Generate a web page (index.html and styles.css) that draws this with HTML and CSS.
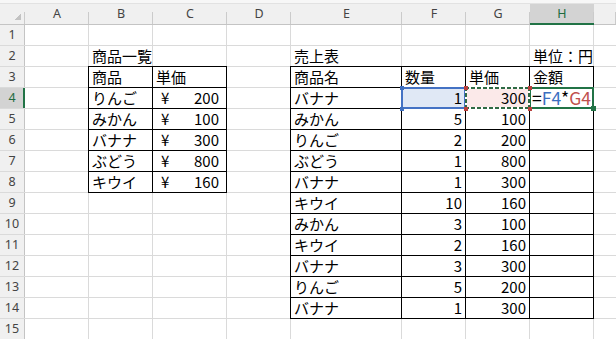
FILE: index.html
```html
<!DOCTYPE html>
<html>

<head>
    <meta charset="UTF-8">
    <title>売上表</title>
    <link rel="stylesheet" href="styles.css">
</head>

<body>
    <div class="strip"></div>
    <div class="cols">
        <div class="corner"></div>
        <div>A</div><div>B</div><div>C</div><div>D</div><div>E</div><div>F</div><div>G</div><div class="on">H</div><div></div>
    </div>
    <div class="grid">
        <!-- 1 -->
        <div class="rh">1</div><div></div><div></div><div></div><div></div><div></div><div></div><div></div><div></div><div></div>
        <!-- 2 -->
        <div class="rh">2</div><div></div><div>商品一覧</div><div></div><div></div><div>売上表</div><div></div><div></div><div>単位：円</div><div></div>
        <!-- 3 -->
        <div class="rh">3</div><div></div><div class="b">商品</div><div class="b">単価</div><div></div>
        <div class="b">商品名</div><div class="b">数量</div><div class="b">単価</div><div class="b">金額</div><div></div>
        <!-- 4 -->
        <div class="rh on">4</div><div></div><div class="b">りんご</div><div class="b yen"><span>¥</span><span>200</span></div><div></div>
        <div class="b">バナナ</div><div class="b n ref ref1">1</div><div class="b n ref ref2">300</div>
        <div class="b act">=<span class="r1">F4</span>*<span class="r2">G4</span></div><div></div>
        <!-- 5 -->
        <div class="rh">5</div><div></div><div class="b">みかん</div><div class="b yen"><span>¥</span><span>100</span></div><div></div>
        <div class="b">みかん</div><div class="b n">5</div><div class="b n">100</div><div class="b"></div><div></div>
        <!-- 6 -->
        <div class="rh">6</div><div></div><div class="b">バナナ</div><div class="b yen"><span>¥</span><span>300</span></div><div></div>
        <div class="b">りんご</div><div class="b n">2</div><div class="b n">200</div><div class="b"></div><div></div>
        <!-- 7 -->
        <div class="rh">7</div><div></div><div class="b">ぶどう</div><div class="b yen"><span>¥</span><span>800</span></div><div></div>
        <div class="b">ぶどう</div><div class="b n">1</div><div class="b n">800</div><div class="b"></div><div></div>
        <!-- 8 -->
        <div class="rh">8</div><div></div><div class="b">キウイ</div><div class="b yen"><span>¥</span><span>160</span></div><div></div>
        <div class="b">バナナ</div><div class="b n">1</div><div class="b n">300</div><div class="b"></div><div></div>
        <!-- 9 -->
        <div class="rh">9</div><div></div><div></div><div></div><div></div>
        <div class="b">キウイ</div><div class="b n">10</div><div class="b n">160</div><div class="b"></div><div></div>
        <!-- 10 -->
        <div class="rh">10</div><div></div><div></div><div></div><div></div>
        <div class="b">みかん</div><div class="b n">3</div><div class="b n">100</div><div class="b"></div><div></div>
        <!-- 11 -->
        <div class="rh">11</div><div></div><div></div><div></div><div></div>
        <div class="b">キウイ</div><div class="b n">2</div><div class="b n">160</div><div class="b"></div><div></div>
        <!-- 12 -->
        <div class="rh">12</div><div></div><div></div><div></div><div></div>
        <div class="b">バナナ</div><div class="b n">3</div><div class="b n">300</div><div class="b"></div><div></div>
        <!-- 13 -->
        <div class="rh">13</div><div></div><div></div><div></div><div></div>
        <div class="b">りんご</div><div class="b n">5</div><div class="b n">200</div><div class="b"></div><div></div>
        <!-- 14 -->
        <div class="rh">14</div><div></div><div></div><div></div><div></div>
        <div class="b">バナナ</div><div class="b n">1</div><div class="b n">300</div><div class="b"></div><div></div>
        <!-- 15 -->
        <div class="rh">15</div><div></div><div></div><div></div><div></div><div></div><div></div><div></div><div></div><div></div>
    </div>
</body>

</html>
```

FILE: styles.css
```css
* {
    margin: 0;
    padding: 0;
    box-sizing: border-box;
}

html,
body {
    width: 100%;
    height: 100%;
    overflow: hidden;
    background: #fff;
}

body {
    font-family: "Noto Sans CJK JP", "Noto Sans", sans-serif;
    font-size: 15px;
    color: #000;
}

.strip {
    height: 4px;
    background: #f7f7f7;
    border-bottom: 1px solid #e2e2e2;
}

/* column letters */
.cols {
    display: grid;
    grid-template-columns: 25px 64px 64px 74px 64px 111px 64px 64px 64px 1fr;
    height: 21px;
    background: #f0f0f0;
    border-bottom: 1px solid #c4c4c4;
}

.cols div {
    background: linear-gradient(#cbcbcb, #cbcbcb) right bottom / 1px 12px no-repeat;
    font: 12.5px/20px "Noto Sans", sans-serif;
    color: #444;
    text-align: center;
}

.cols .corner {
    background:
        linear-gradient(to bottom right, transparent 50%, #c2c2c2 50%) 14px 9px / 7px 7px no-repeat,
        linear-gradient(#cbcbcb, #cbcbcb) right bottom / 1px 12px no-repeat;
}

.cols .on {
    background-color: #d3d3d3;
    color: #1d6b3f;
    box-shadow: 0 1px 0 #217346, inset 0 -1px 0 #217346;
}

/* cells */
.grid {
    display: grid;
    grid-template-columns: 24px 63px 63px 73px 63px 110px 63px 63px 63px 1fr;
    grid-auto-rows: 20px;
    gap: 1px;
    background: #dadada;
}

.grid > div {
    display: flex;
    align-items: center;
    padding: 0 3px;
    background: #fff;
    line-height: 20px;
    white-space: nowrap;
}

.grid .rh {
    justify-content: center;
    padding: 0;
    background: #f0f0f0;
    font: 12.5px/20px "Noto Sans", sans-serif;
    color: #444;
    box-shadow: 1px 0 0 #c4c4c4;
}

.grid .rh.on {
    background: #d3d3d3;
    color: #1d6b3f;
    box-shadow: 1px 0 0 #217346, inset -1px 0 0 #217346;
}

.b {
    outline: 1px solid #000;
}

.n {
    justify-content: flex-end;
}

.grid .yen {
    justify-content: space-between;
    padding: 0 7px 0 8px;
}

/* cells referenced by the formula being typed */
.ref {
    position: relative;
}

.ref::after {
    content: "";
    position: absolute;
    inset: -2px -3px -3px -2px;
    background:
        linear-gradient(var(--mark), var(--mark)) left top / 4px 4px no-repeat,
        linear-gradient(var(--mark), var(--mark)) right top / 4px 4px no-repeat,
        linear-gradient(var(--mark), var(--mark)) left bottom / 4px 4px no-repeat,
        linear-gradient(var(--mark), var(--mark)) right bottom / 4px 4px no-repeat;
}

.grid .ref1 {
    --mark: #3f6fbf;
    z-index: 1;
    background: #e0e8f5;
    outline: 2px solid #4472c4;
    outline-offset: -1px;
}

.grid .ref2 {
    --mark: #b8403d;
    z-index: 2;
    background: #fbe9e9;
    outline: none;
}

/* copy marquee */
.ref2::before {
    content: "";
    position: absolute;
    inset: -1px;
    background:
        repeating-linear-gradient(90deg, #2f6a44 0 4px, #fff 4px 6px) top / 100% 2px no-repeat,
        repeating-linear-gradient(90deg, #2f6a44 0 4px, #fff 4px 6px) bottom / 100% 2px no-repeat,
        repeating-linear-gradient(#2f6a44 0 4px, #fff 4px 6px) left / 2px 100% no-repeat,
        repeating-linear-gradient(#2f6a44 0 4px, #fff 4px 6px) right / 2px 100% no-repeat;
}

/* cell being edited */
.grid .act {
    position: relative;
    z-index: 1;
    padding-left: 2px;
    font-size: 17.5px;
    outline: 2px solid #217346;
    outline-offset: -1px;
}

.act::after {
    content: "";
    position: absolute;
    right: -3px;
    bottom: -3px;
    width: 5px;
    height: 5px;
    background: #217346;
}

.r1 {
    color: #3b6fc1;
}

.r2 {
    color: #c0504d;
}
```
